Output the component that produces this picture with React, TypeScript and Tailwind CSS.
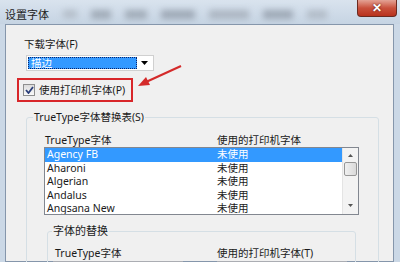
import React from 'react';

const rows = ['Agency FB', 'Aharoni', 'Algerian', 'Andalus', 'Angsana New'];

export default function App() {
  return (
    <div className="relative w-[400px] h-[262px] overflow-hidden bg-[#cbd8e6] text-[10.5px] leading-[14px] text-[#1a1a1a]" style={{ fontFamily: '"Noto Sans", "Noto Sans CJK SC", sans-serif' }}>
      {/* title bar */}
      <div className="h-[24px] flex items-start bg-gradient-to-b from-[#d9e3ee] to-[#c6d4e3]">
        <div className="pl-[5px] pt-[8px] text-[11px] text-[#222]">设置字体</div>
        <div className="flex flex-1 gap-[14px] pt-[10px] pl-[14px] opacity-70">
          <div className="w-[14px] h-[8px] bg-[#a9b2bc] blur-[3px]" />
          <div className="w-[20px] h-[9px] bg-[#8e98a4] blur-[3px]" />
          <div className="w-[22px] h-[9px] bg-[#8f99a5] blur-[3px]" />
          <div className="w-[34px] h-[9px] bg-[#8a94a1] blur-[3px]" />
          <div className="w-[40px] h-[9px] bg-[#9ea7b2] blur-[3px]" />
          <div className="w-[30px] h-[9px] bg-[#8a94a1] blur-[3px]" />
          <div className="w-[20px] h-[9px] bg-[#a7b0bb] blur-[3px]" />
        </div>
        <div className="mr-[3px] w-[40px] h-[17px] rounded-b-[4px] border border-[#6b2a20] border-t-0 bg-gradient-to-b from-[#e3a295] via-[#c9503c] to-[#b8321d] flex items-center justify-center">
          <span className="text-white font-bold text-[12px] leading-none" style={{ textShadow: '0 0 2px #4a1208' }}>✕</span>
        </div>
      </div>

      {/* client area */}
      <div className="ml-[5px] mr-[6px] h-[238px] border border-[#8596ab] bg-[#f0f0f0]">
        <div className="ml-[18px] mt-[12px]">下载字体(F)</div>
        <div className="ml-[20px] mt-[4px] w-[128px] h-[16px] border border-[#d0d0d0] bg-white flex items-center p-[1px]">
          <div className="h-full w-[109px] bg-[#3399ff] border border-dotted border-[#0a246a] text-white flex items-center pl-[2px]">描边</div>
          <div className="flex-1 flex items-center justify-center">
            <svg width="7" height="4" viewBox="0 0 7 4"><path d="M0 0h7L3.5 4z" fill="#000" /></svg>
          </div>
        </div>

        <div className="ml-[11px] mt-[7px] w-[116px] h-[24px] border-2 border-[#d8262a] flex items-center pl-[4px] gap-[4px]">
          <div className="w-[12px] h-[12px] border border-[#8e8f8f] bg-gradient-to-b from-[#dcdcdc] to-[#fafafa] flex items-center justify-center">
            <svg width="9" height="8" viewBox="0 0 9 8"><path d="M1 4l2.5 3L8 1" stroke="#2b3f7a" strokeWidth="1.8" fill="none" /></svg>
          </div>
          <span>使用打印机字体(P)</span>
        </div>

        <fieldset className="ml-[20px] mt-[8px] w-[353px] h-[160px] border border-[#d5dfe5] rounded-[3px]">
          <legend className="ml-[6px] px-[1px]">TrueType字体替换表(S)</legend>
          <div className="flex mt-[9px] pl-[18px]">
            <div className="w-[172px]">TrueType字体</div>
            <div>使用的打印机字体</div>
          </div>
          <div className="ml-[17px] w-[315px] h-[68px] border border-[#828790] bg-white flex overflow-hidden">
            <div className="flex-1 flex flex-col">
              {rows.map((r, i) => (
                <div key={r} className={`h-[13.5px] leading-[13.5px] flex shrink-0 ${i === 0 ? 'bg-[#3399ff] text-white' : ''}`}>
                  <div className="w-[172px] pl-[2px]">{r}</div>
                  <div>未使用</div>
                </div>
              ))}
            </div>
            <div className="w-[16px] bg-[#f3f3f3] border-l border-[#e4e4e4] flex flex-col items-center">
              <svg className="mt-[6px]" width="5" height="3" viewBox="0 0 5 3"><path d="M0 3h5L2.5 0z" fill="#555" /></svg>
              <div className="mt-[5px] w-[13px] h-[14px] border border-[#979797] rounded-[2px] bg-gradient-to-r from-[#f0f0f0] to-[#dadada]" />
              <div className="flex-1" />
              <svg className="mb-[7px]" width="5" height="3" viewBox="0 0 5 3"><path d="M0 0h5L2.5 3z" fill="#555" /></svg>
            </div>
          </div>

          <fieldset className="ml-[20px] mt-[9px] w-[309px] h-[60px] border border-[#d5dfe5] rounded-[3px]">
            <legend className="ml-[4px] px-[1px] text-[11px]">字体的替换</legend>
            <div className="flex mt-[8px] pl-[7px]">
              <div className="w-[162px]">TrueType字体</div>
              <div>使用的打印机字体(T)</div>
            </div>
            <div className="flex mt-[1px] pl-[5px]">
              <div className="w-[130px] h-[18px] border border-[#abadb3] bg-white" />
              <div className="ml-[34px] w-[130px] h-[18px] border border-[#abadb3] bg-white" />
            </div>
          </fieldset>
        </fieldset>
      </div>

      {/* red arrow annotation */}
      <svg className="absolute left-0 top-0 pointer-events-none" width="400" height="262">
        <line x1="181" y1="66" x2="146" y2="82" stroke="#d42a2a" strokeWidth="2" />
        <path d="M138 86 L146 77 L150 85 Z" fill="#d42a2a" />
      </svg>
    </div>
  );
}
